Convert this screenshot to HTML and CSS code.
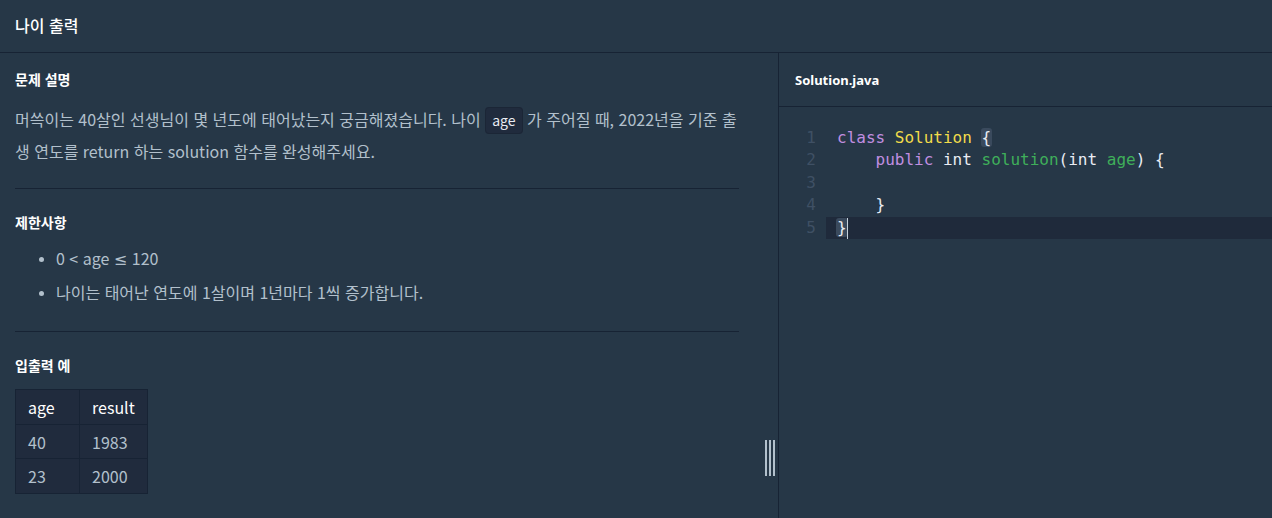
FILE: index.html
```html
<!DOCTYPE html>
<html lang="ko">
<head>
<meta charset="utf-8">
<title>나이 출력</title>
<link rel="stylesheet" href="styles.css">
</head>
<body>
<div class="app">
  <header class="topbar"><h1 class="title">나이 출력</h1></header>
  <main class="main">
    <section class="guide">
      <div class="guide-inner">
        <h2 class="sec-title">문제 설명</h2>
        <p class="desc">머쓱이는 40살인 선생님이 몇 년도에 태어났는지 궁금해졌습니다. 나이 <code class="ic">age</code> 가 주어질 때, 2022년을 기준 출생 연도를 return 하는 solution 함수를 완성해주세요.</p>
        <hr class="rule first">
        <h2 class="sec-title">제한사항</h2>
        <ul class="limits">
          <li>0 &lt; age <span class="sym">≤</span> 120</li>
          <li>나이는 태어난 연도에 1살이며 1년마다 1씩 증가합니다.</li>
        </ul>
        <hr class="rule">
        <h2 class="sec-title">입출력 예</h2>
        <table class="io">
          <thead><tr><th>age</th><th>result</th></tr></thead>
          <tbody>
            <tr><td>40</td><td>1983</td></tr>
            <tr><td>23</td><td>2000</td></tr>
          </tbody>
        </table>
      </div>
      <div class="resizer"><span></span><span></span><span></span></div>
    </section>
    <section class="editor">
      <div class="tab">Solution.java</div>
      <div class="code">
        <div class="line"><span class="ln">1</span><span class="src"><span class="kw">class</span> <span class="cls">Solution</span> <span class="mb">{</span></span></div>
        <div class="line"><span class="ln">2</span><span class="src">    <span class="kw">public</span> <span class="ty">int</span> <span class="fn">solution</span>(<span class="ty">int</span> <span class="var">age</span>) {</span></div>
        <div class="line"><span class="ln">3</span><span class="src"> </span></div>
        <div class="line"><span class="ln">4</span><span class="src">    }</span></div>
        <div class="line active"><span class="ln">5</span><span class="src"><span class="mb">}</span><span class="cursor"></span></span></div>
      </div>
    </section>
  </main>
</div>
</body>
</html>
```
FILE: styles.css
```css
* { box-sizing: border-box; }
html, body { margin: 0; padding: 0; }
body {
  background: #263747;
  font-family: "Noto Sans CJK KR", "Noto Sans", sans-serif;
  color: #b2c0cc;
  width: 1272px;
  height: 518px;
  overflow: hidden;
}
.app { display: flex; flex-direction: column; height: 518px; }
.topbar {
  height: 53px;
  border-bottom: 1px solid #172334;
  display: flex;
  align-items: center;
  padding: 0 15px;
  flex-shrink: 0;
}
.title {
  margin: 0;
  font-size: 16px;
  font-weight: 500;
  color: #ffffff;
  line-height: 20px;
  padding-bottom: 3px;
}
.main { display: flex; flex: 1; min-height: 0; }
.guide {
  width: 779px;
  border-right: 1px solid #172334;
  position: relative;
  flex-shrink: 0;
}
.guide-inner { padding: 16px 39px 0 15px; }
.sec-title {
  margin: 0;
  font-size: 14px;
  font-weight: 700;
  line-height: 20px;
  color: #ffffff;
}
.desc {
  margin: 14px -6px 0 0;
  font-size: 16px;
  line-height: 32px;
  color: #b2c0cc;
}
.ic {
  font-family: "Noto Sans CJK KR", "Noto Sans", sans-serif;
  font-size: 14px;
  line-height: 1;
  color: #e9ecf3;
  background: #202b3d;
  border: 1px solid #1b2636;
  border-radius: 4px;
  padding: 2px 6px 3px;
}
.rule {
  margin: 20px 0 23px;
  border: 0;
  border-top: 1px solid #172334;
  height: 0;
}
.rule.first { margin-top: 21px; }
.limits {
  margin: 10px 0 22px;
  padding-left: 41px;
  font-size: 16px;
  line-height: 33px;
}
.sym { font-family: "Noto Sans", "DejaVu Sans", sans-serif; }
.limits + .rule { margin-top: 0; }
.limits li::marker { color: #b2c0cc; font-size: 13px; }
.io {
  margin-top: 14px;
  border-collapse: collapse;
  background: #202b3d;
  font-size: 16px;
}
.io th, .io td {
  border: 1px solid #172334;
  height: 34px;
  padding: 0 12px;
  text-align: left;
  line-height: 20px;
}
.io th { height: 35px; font-weight: 400; color: #ffffff; }
.io tr:last-child td { height: 35px; }
.io td { color: #b2c0cc; }
.io th:first-child, .io td:first-child { width: 64px; }
.resizer {
  position: absolute;
  left: 765px;
  top: 387px;
  display: flex;
  gap: 2px;
  height: 36px;
}
.resizer span { width: 2px; height: 36px; background: #b2c0cc; }
.editor { flex: 1; min-width: 0; }
.tab {
  height: 54px;
  border-bottom: 1px solid #172334;
  display: flex;
  align-items: center;
  padding: 0 16px;
  font-family: "Noto Sans", "Noto Sans CJK KR", sans-serif;
  font-size: 13px;
  font-weight: 700;
  color: #ffffff;
}
.code {
  padding-top: 20px;
  font-family: "DejaVu Sans Mono", monospace;
  font-size: 16px;
  line-height: 22.4px;
  color: #e9ecf3;
}
.line { display: flex; height: 22.4px; }
.ln {
  width: 47px;
  padding-right: 10px;
  text-align: right;
  color: #3f5064;
  flex-shrink: 0;
}
.src { white-space: pre; padding-left: 11px; flex: 1; }
.active .src { background: #1f2a3b; }
.kw { color: #c08ee0; }
.cls { color: #f2dc4a; }
.fn { color: #3fae5a; }
.var { color: #3fae5a; }
.ty { color: #e9ecf3; }
.mb { background: #3a4a5d; border-radius: 3px; padding: 0 1px; margin: 0 -1px; }
.cursor {
  display: inline-block;
  width: 1px;
  height: 21px;
  background: #c5d0da;
  vertical-align: top;
  margin-top: 1px;
}
```
